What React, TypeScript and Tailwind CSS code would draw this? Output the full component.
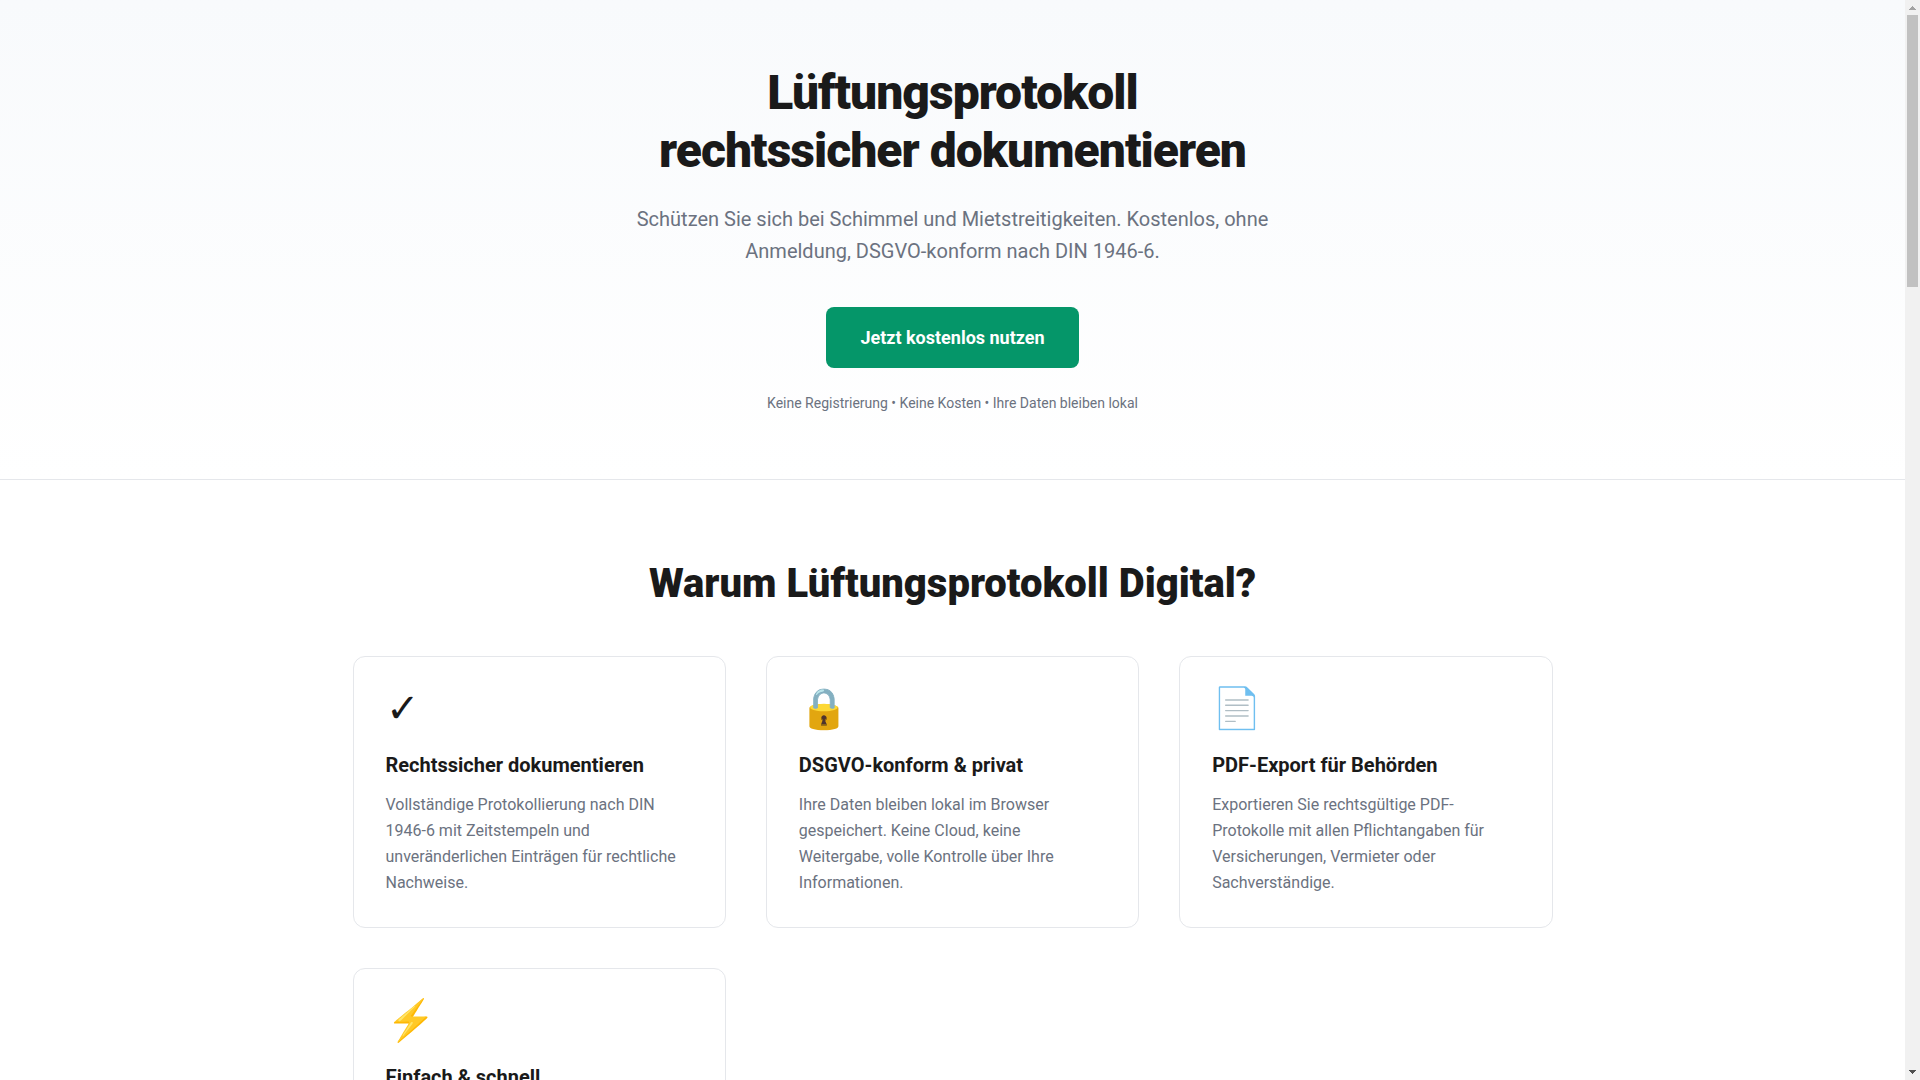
const features = [
  {
    icon: '✓',
    title: 'Rechtssicher dokumentieren',
    text: 'Vollständige Protokollierung nach DIN 1946-6 mit Zeitstempeln und unveränderlichen Einträgen für rechtliche Nachweise.',
  },
  {
    icon: '🔒',
    title: 'DSGVO-konform & privat',
    text: 'Ihre Daten bleiben lokal im Browser gespeichert. Keine Cloud, keine Weitergabe, volle Kontrolle über Ihre Informationen.',
  },
  {
    icon: '📄',
    title: 'PDF-Export für Behörden',
    text: 'Exportieren Sie rechtsgültige PDF-Protokolle mit allen Pflichtangaben für Versicherungen, Vermieter oder Sachverständige.',
  },
  {
    icon: '⚡',
    title: 'Einfach & schnell',
    text: 'In wenigen Sekunden eingetragen.',
  },
];

function Hero() {
  return (
    <header className="border-b border-gray-200 bg-linear-to-b from-[#f8fafc] to-white px-6 py-16 text-center">
      <h1 className="text-[48px] leading-[58px] font-black tracking-[-0.02em]">
        Lüftungsprotokoll
        <br />
        rechtssicher dokumentieren
      </h1>
      <p className="mx-auto mt-[23px] max-w-[700px] text-xl leading-8 text-[#6b7280]">
        Schützen Sie sich bei Schimmel und Mietstreitigkeiten. Kostenlos, ohne Anmeldung, DSGVO-konform nach DIN 1946-6.
      </p>
      <button
        type="button"
        className="mt-10 cursor-pointer rounded-lg bg-[#059669] px-[34px] py-4 text-lg leading-[29px] font-bold text-white"
      >
        Jetzt kostenlos nutzen
      </button>
      <p className="mt-6 text-sm leading-[23px] text-[#6b7280]">
        Keine Registrierung • Keine Kosten • Ihre Daten bleiben lokal
      </p>
    </header>
  );
}

function Features() {
  return (
    <section className="px-6 py-20">
      <h2 className="text-center text-[40px] leading-[48px] font-black">Warum Lüftungsprotokoll Digital?</h2>
      <ul className="mx-auto mt-12 grid max-w-[1200px] grid-cols-1 gap-10 md:grid-cols-2 lg:grid-cols-3">
        {features.map((f) => (
          <li key={f.title} className="rounded-xl border border-gray-200 bg-white px-8 pt-8 pb-[31px]">
            <div className="mb-5 text-[40px] leading-10">{f.icon}</div>
            <h3 className="mb-[11px] text-xl leading-8 font-bold">{f.title}</h3>
            <p className="text-base leading-[26px] text-[#6b7280]">{f.text}</p>
          </li>
        ))}
      </ul>
    </section>
  );
}

function ScrollTrack() {
  return (
    <div aria-hidden="true" className="flex w-[15px] shrink-0 flex-col items-center bg-[#f1f1f1]">
      <svg className="h-[15px] w-[15px] shrink-0" viewBox="0 0 15 15" shapeRendering="crispEdges" fill="#a3a3a3">
        <path d="M7 6h1v1h1v1h1v1h1v1H4V9h1V8h1V7h1z" />
      </svg>
      <div className="flex w-[11px] grow flex-col">
        <div className="h-[272px] bg-[#c1c1c1]" />
      </div>
      <svg className="h-[15px] w-[15px] shrink-0" viewBox="0 0 15 15" shapeRendering="crispEdges" fill="#505050">
        <path d="M4 5h7v1h-1v1H9v1H8v1H7V8H6V7H5V6H4z" />
      </svg>
    </div>
  );
}

export default function App() {
  return (
    <div className="flex h-screen overflow-hidden bg-white font-[Roboto,sans-serif] text-[#1a1a1a]">
      <main className="min-w-0 grow overflow-y-auto [scrollbar-width:none]">
        <Hero />
        <Features />
      </main>
      <ScrollTrack />
    </div>
  );
}
